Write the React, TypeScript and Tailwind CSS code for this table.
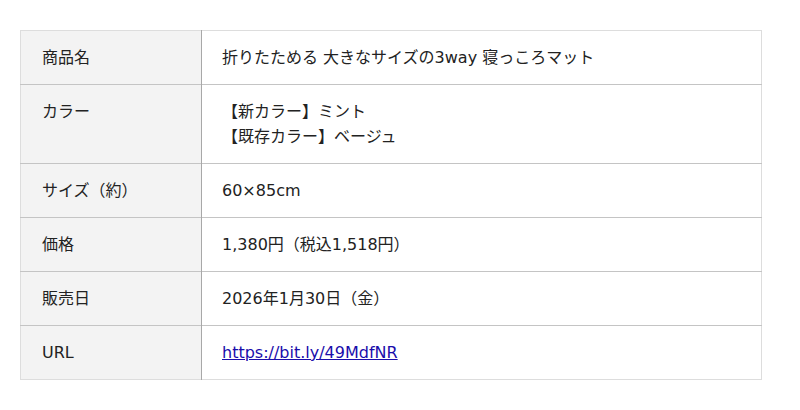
const rows: { label: string; value: React.ReactNode }[] = [
  { label: "商品名", value: "折りたためる 大きなサイズの3way 寝っころマット" },
  {
    label: "カラー",
    value: (
      <>
        【新カラー】ミント
        <br />
        【既存カラー】ベージュ
      </>
    ),
  },
  { label: "サイズ（約）", value: "60×85cm" },
  { label: "価格", value: "1,380円（税込1,518円）" },
  { label: "販売日", value: "2026年1月30日（金）" },
  {
    label: "URL",
    value: (
      <a href="#" className="text-[#1a0dab] underline">
        https://bit.ly/49MdfNR
      </a>
    ),
  },
];

const App = () => {
  return (
    <div
      className="w-[800px] h-[410px] bg-white pt-[30px] pl-[20px]"
      style={{ fontFamily: '"DejaVu Sans", "Noto Sans CJK JP", sans-serif' }}
    >
      <table className="w-[742px] border-collapse border border-[#dddddd] text-[16px] leading-[25px] text-[#222222]">
        <tbody>
          {rows.map((row, i) => (
            <tr key={i} className="border-t border-[#c4c4c4] first:border-t-0">
              <th className="w-[181px] bg-[#f3f3f3] border-r border-[#a8a8a8] text-left align-top font-normal pl-[21px] pr-3 pt-[14px] pb-[14px]">
                {row.label}
              </th>
              <td className="align-top pl-[20px] pr-3 pt-[14px] pb-[14px]">
                {row.value}
              </td>
            </tr>
          ))}
        </tbody>
      </table>
    </div>
  );
};

export default App;
